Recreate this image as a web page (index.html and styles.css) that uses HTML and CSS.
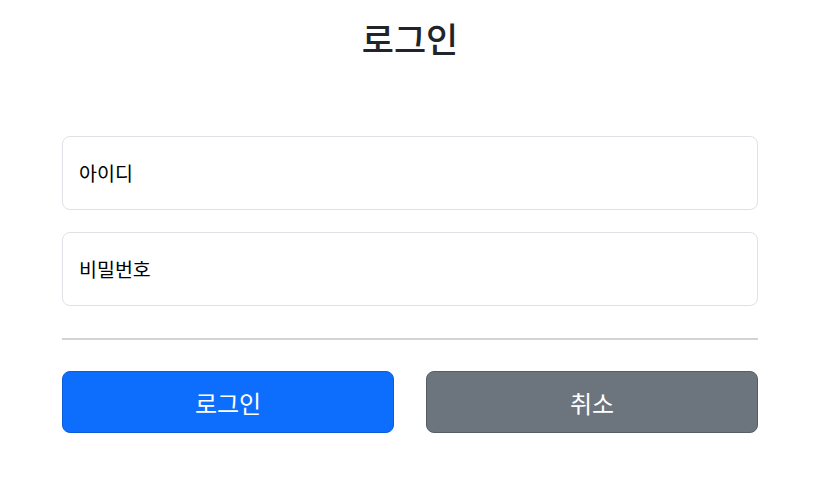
FILE: index.html
```html
<!DOCTYPE html>
<html lang="ko">
<head>
<meta charset="utf-8">
<link rel="stylesheet" href="styles.css">
</head>
<body>
<div class="page">
  <h1 class="title">로그인</h1>
  <form class="form">
    <div class="field">아이디</div>
    <div class="field">비밀번호</div>
    <div class="divider"></div>
    <div class="actions">
      <button type="button" class="btn btn-primary">로그인</button>
      <button type="button" class="btn btn-secondary">취소</button>
    </div>
  </form>
</div>
</body>
</html>
```
FILE: styles.css
```css
html, body {
  margin: 0;
  padding: 0;
  background: #fff;
}
body {
  font-family: "Noto Sans CJK KR", "Noto Sans", sans-serif;
  color: #212529;
}
.page {
  width: 696px;
  padding-left: 62px;
}
.title {
  margin: 14px 0 0;
  font-size: 35px;
  line-height: 48px;
  font-weight: 500;
  text-align: center;
}
.form {
  margin-top: 74px;
  display: flex;
  flex-direction: column;
}
.field {
  box-sizing: border-box;
  height: 74px;
  border: 1px solid #dee2e6;
  border-radius: 8px;
  padding: 0 16px 1px;
  display: flex;
  align-items: center;
  font-size: 19.5px;
  color: #000;
}
.field + .field {
  margin-top: 22px;
}
.divider {
  margin-top: 32px;
  height: 2px;
  background: #d3d3d3;
}
.actions {
  margin-top: 31px;
  display: flex;
  gap: 32px;
}
.btn {
  flex: 1;
  height: 62px;
  border-radius: 8px;
  font-family: inherit;
  font-size: 24px;
  color: #fff;
  cursor: pointer;
}
.btn-primary {
  background: #0d6efd;
  border: 1px solid #0b5ed7;
}
.btn-secondary {
  background: #6c757d;
  border: 1px solid #565e64;
}
```
